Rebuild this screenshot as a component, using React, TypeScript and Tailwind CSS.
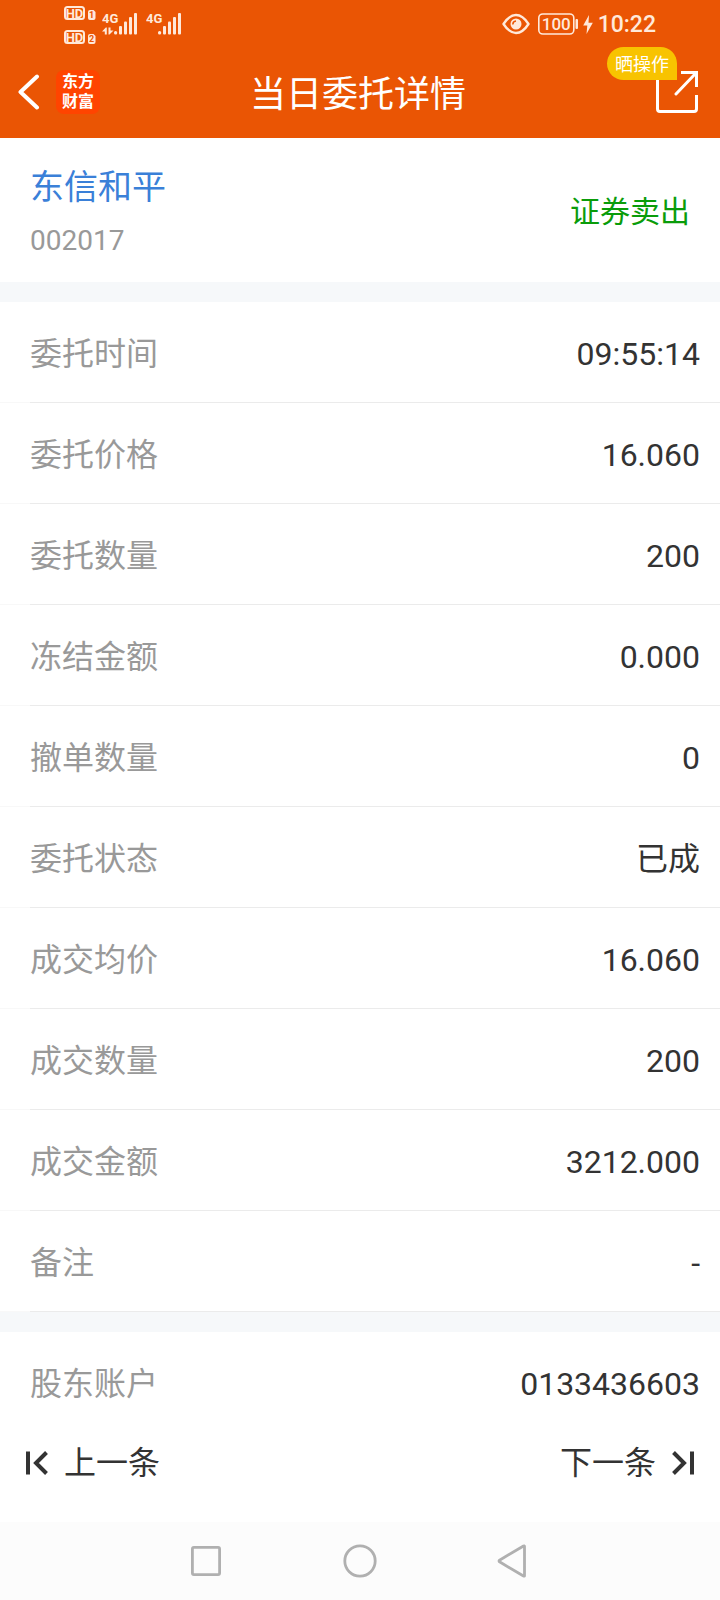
import React from "react";

const orderRows = [
  { label: "委托时间", value: "09:55:14" },
  { label: "委托价格", value: "16.060" },
  { label: "委托数量", value: "200" },
  { label: "冻结金额", value: "0.000" },
  { label: "撤单数量", value: "0" },
  { label: "委托状态", value: "已成" },
  { label: "成交均价", value: "16.060" },
  { label: "成交数量", value: "200" },
  { label: "成交金额", value: "3212.000" },
  { label: "备注", value: "-" },
];

function HdBadge({ slot }: { slot: string }) {
  return (
    <svg width="32" height="14" viewBox="0 0 32 14" aria-hidden="true">
      <rect x="1" y="1" width="19" height="12" rx="2.5" fill="none" stroke="#ffe9da" strokeWidth="2" />
      <text x="10.5" y="11.600" textAnchor="middle" fontSize="13" fontWeight="700" fill="#ffe9da">HD</text>
      <path d="M24 6 Q24 4 26 4 H29.500 L31.500 6 V12 Q31.500 14 29.500 14 H26 Q24 14 24 12 Z" fill="#ffe9da" />
      <text x="27.700" y="12.300" textAnchor="middle" fontSize="9" fontWeight="700" fill="#ea5504">{slot}</text>
    </svg>
  );
}

function Signal({ data }: { data?: boolean }) {
  return (
    <svg width="36" height="24" viewBox="0 0 36 24" aria-hidden="true" fill="#ffe9da">
      <text x="0" y="11" fontSize="13" fontWeight="700" fontFamily="'Liberation Sans Narrow', Roboto">4G</text>
      {data && (
        <g>
          <path d="M4.800 22.500 H2.800 V19.500 H0 L3.800 15.500 H4.800 Z" />
          <path d="M6.500 15.500 H8.500 V18.500 H11.500 L7.500 22.500 H6.500 Z" />
        </g>
      )}
      <rect x="12" y="19" width="3.200" height="3.500" rx="1.500" />
      <rect x="17" y="14" width="3" height="8.500" rx="1" />
      <rect x="22" y="9.500" width="3" height="13" rx="1" />
      <rect x="27" y="5" width="3" height="17.500" rx="1" />
      <rect x="32" y="1" width="3" height="21.500" rx="1" />
    </svg>
  );
}

function StatusBar() {
  return (
    <div className="flex h-[50px] items-start justify-between px-16 text-[#ffe9da]">
      <div className="flex items-start">
        <div className="flex flex-col gap-2.5 pt-1.5">
          <HdBadge slot="1" />
          <HdBadge slot="2" />
        </div>
        <div className="flex gap-2 pt-3 pl-1.5">
          <Signal data />
          <Signal />
        </div>
      </div>
      <div className="flex h-12 items-center">
        <svg width="28" height="22" viewBox="0 0 28 22" aria-hidden="true" fill="none" stroke="currentColor">
          <path d="M1.500 11 C6 4 10 2 14 2 S22 4 26.500 11 C22 18 18 20 14 20 S6 18 1.500 11 Z" strokeWidth="2.400" strokeLinejoin="round" />
          <circle cx="14" cy="11" r="5.500" fill="currentColor" stroke="none" />
          <path d="M10.800 11.500 A3.500 3.500 0 0 1 14 8" stroke="#ea5504" strokeWidth="1.500" />
        </svg>
        <svg className="ml-2" width="56" height="24" viewBox="0 0 56 24" aria-hidden="true" fill="currentColor">
          <rect x="0.800" y="2" width="35" height="20" rx="4" fill="none" stroke="currentColor" strokeWidth="1.600" />
          <text x="18.300" y="18" textAnchor="middle" fontSize="17" fontWeight="500" fontFamily="Roboto">100</text>
          <rect x="37.500" y="7" width="2.500" height="10" rx="1" />
          <path d="M51 3 L45.200 13.500 H49.300 L48.500 22 L54.800 10.800 H50.500 Z" />
        </svg>
        <time className="ml-1 pt-0.5 text-[23px] leading-6 font-medium">10:22</time>
      </div>
    </div>
  );
}

function TitleBar() {
  return (
    <header className="grid h-[88px] grid-cols-[1fr_auto_1fr] items-center pr-[22px] pb-1 pl-[18px] text-white">
      <div className="flex items-center gap-4">
        <button type="button" aria-label="返回" className="cursor-pointer">
          <svg width="22" height="36" viewBox="0 0 22 36" fill="none" stroke="currentColor" strokeWidth="4" strokeLinecap="round" strokeLinejoin="round">
            <path d="M19 2.500 L2.500 18 L19 33.500" />
          </svg>
        </button>
        <a href="#home" className="flex size-11 flex-col items-center justify-center rounded-lg bg-[#ff4400] text-base leading-5 font-bold">
          <span>东方</span>
          <span>财富</span>
        </a>
      </div>
      <h1 className="pt-1.5 text-4xl leading-10">当日委托详情</h1>
      <button type="button" className="relative cursor-pointer justify-self-end">
        <svg width="42" height="42" viewBox="0 0 42 42" aria-hidden="true" fill="none" stroke="currentColor" strokeWidth="3">
          <path d="M1.500 2 V38 Q1.500 40.500 4 40.500 H38 Q40.500 40.500 40.500 38 V24" />
          <path d="M25 1.500 H40.500 V16" />
          <path d="M40 2 L20 23" strokeLinecap="round" />
        </svg>
        <span className="absolute right-[21px] bottom-[33px] rounded-full rounded-br-none bg-[#f8c300] px-2 pt-0.5 text-lg leading-[31px] whitespace-nowrap">
          晒操作
        </span>
      </button>
    </header>
  );
}

function Divider() {
  return <div className="h-5 bg-[#f6f8fa]" />;
}

export default function App() {
  return (
    <div className="flex min-h-screen flex-col bg-white font-[Roboto,'Noto_Sans_CJK_SC',sans-serif] text-[#333333]">
      <div className="bg-[#ea5504]">
        <StatusBar />
        <TitleBar />
      </div>

      <main>
        <section className="flex h-36 items-center justify-between px-[30px] pt-1">
          <div className="flex flex-col gap-3.5 pt-1">
            <h2 className="text-[34px] leading-10 text-[#3a80d8]">东信和平</h2>
            <p className="text-[28px] leading-10 text-[#999999]">002017</p>
          </div>
          <p className="text-3xl leading-10 text-[#0a9c0a]">证券卖出</p>
        </section>

        <Divider />

        <dl className="text-[32px] leading-10">
          {orderRows.map((row) => (
            <div key={row.label} className="flex h-[101px]">
              <div className="w-[30px] border-b border-[#f8f8f8]" />
              <div className="flex flex-1 items-center justify-between border-b border-[#ebebeb] pt-[3px] pr-5">
                <dt className="text-[#999999]">{row.label}</dt>
                <dd>{row.value}</dd>
              </div>
            </div>
          ))}
        </dl>

        <Divider />

        <dl className="flex h-[101px] items-center justify-between pt-0.5 pr-5 pl-[30px] text-[32px] leading-10">
          <dt className="text-[#999999]">股东账户</dt>
          <dd>0133436603</dd>
        </dl>
      </main>

      <div className="flex flex-1 items-start justify-between px-6 pt-2.5 pb-8 text-[32px] leading-10">
        <button type="button" className="flex cursor-pointer items-center gap-4">
          <svg width="24" height="24" viewBox="0 0 24 24" aria-hidden="true" fill="none" stroke="currentColor" strokeWidth="4">
            <path d="M4 0.500 V23.500 M22.500 1.500 L12 12 L22.500 22.500" />
          </svg>
          上一条
        </button>
        <button type="button" className="flex cursor-pointer items-center gap-4">
          下一条
          <svg width="24" height="24" viewBox="0 0 24 24" aria-hidden="true" fill="none" stroke="currentColor" strokeWidth="4">
            <path d="M20 0.500 V23.500 M1.500 1.500 L12 12 L1.500 22.500" />
          </svg>
        </button>
      </div>

      <nav className="flex h-[78px] items-center justify-center gap-[120px] bg-[#fcfcfc] text-[#b0b0b0]">
        <button type="button" aria-label="最近任务" className="cursor-pointer">
          <svg width="34" height="34" viewBox="0 0 34 34" fill="none" stroke="currentColor" strokeWidth="2.800">
            <rect x="3.400" y="3.400" width="27.200" height="27.200" rx="1.500" />
          </svg>
        </button>
        <button type="button" aria-label="主屏幕" className="cursor-pointer">
          <svg width="34" height="34" viewBox="0 0 34 34" fill="none" stroke="currentColor" strokeWidth="2.800">
            <circle cx="17" cy="17" r="15.200" />
          </svg>
        </button>
        <button type="button" aria-label="返回上级" className="cursor-pointer">
          <svg width="34" height="34" viewBox="0 0 34 34" fill="none" stroke="currentColor" strokeWidth="2.800" strokeLinejoin="round">
            <path d="M27.500 2.300 Q27.500 1.500 26.500 2 L2.500 16.200 Q1.500 17 2.500 17.800 L26.500 32 Q27.500 32.500 27.500 31.700 Z" />
          </svg>
        </button>
      </nav>
    </div>
  );
}
